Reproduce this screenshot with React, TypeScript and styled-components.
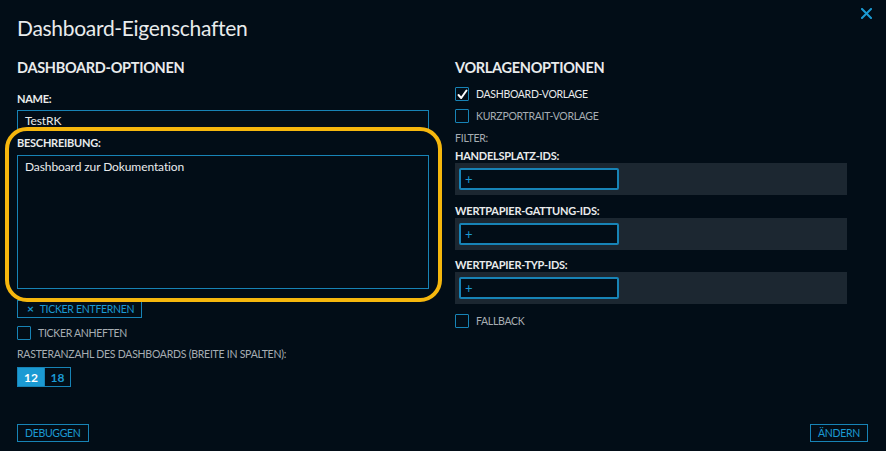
import React from 'react';
import styled, { createGlobalStyle } from 'styled-components';

const BLUE = '#1b9ad3';
const BORDER = '#1783b6';
const TEXT = '#e9ebec';
const MUTED = '#a7adb3';

const GlobalStyle = createGlobalStyle`
  html, body {
    margin: 0;
    padding: 0;
    background: #020d17;
  }
  body {
    font-family: Lato, "Open Sans", sans-serif;
    color: ${TEXT};
  }
`;

const Dialog = styled.div`
  position: relative;
  width: 886px;
  height: 451px;
  box-sizing: border-box;
  padding: 0 18px 9px 17px;
  background: #020d17;
  display: flex;
  flex-direction: column;
  overflow: hidden;
`;

const Header = styled.div`
  height: 56px;
  box-sizing: border-box;
  padding-top: 14px;
`;

const Title = styled.h1`
  margin: 0;
  font-size: 21px;
  letter-spacing: -0.3px;
  line-height: 28px;
  font-weight: 400;
  color: ${TEXT};
`;

const CloseButton = styled.button`
  position: absolute;
  top: 6px;
  right: 12px;
  background: none;
  border: none;
  padding: 2px;
  cursor: pointer;
  display: flex;
`;

const Columns = styled.div`
  display: grid;
  grid-template-columns: 412px 392px;
  column-gap: 26px;
`;

const Column = styled.div`
  display: flex;
  flex-direction: column;
  align-items: flex-start;
`;

const SectionTitle = styled.h2`
  margin: 0;
  font-size: 14.5px;
  letter-spacing: -0.3px;
  line-height: 24px;
  font-weight: 700;
  color: ${TEXT};
`;

const FieldLabel = styled.div<{ $gap?: number; $muted?: boolean }>`
  margin-top: ${p => p.$gap ?? 0}px;
  font-size: 11px;
  letter-spacing: -0.25px;
  line-height: 15px;
  font-weight: 700;
  text-transform: uppercase;
  color: ${p => (p.$muted ? MUTED : TEXT)};
`;

const MutedLabel = styled.div<{ $gap?: number }>`
  margin-top: ${p => p.$gap ?? 0}px;
  font-size: 10.5px;
  letter-spacing: -0.25px;
  line-height: 15px;
  font-weight: 400;
  text-transform: uppercase;
  color: ${MUTED};
`;

const TextInput = styled.div`
  margin-top: 4px;
  width: 100%;
  height: 21px;
  box-sizing: border-box;
  border: 1px solid ${BORDER};
  padding: 0 7px;
  font-size: 12px;
  letter-spacing: -0.1px;
  line-height: 19px;
  color: ${TEXT};
`;

const DescriptionGroup = styled.div`
  position: relative;
  width: 100%;
  margin-top: 4px;
`;

const Highlight = styled.div`
  position: absolute;
  left: -12px;
  right: -13px;
  top: -8px;
  bottom: -13px;
  border: 4px solid #f6b70d;
  border-radius: 22px;
  pointer-events: none;
  z-index: 2;
`;

const TextArea = styled.div`
  margin-top: 5px;
  width: 100%;
  height: 134px;
  box-sizing: border-box;
  border: 1px solid ${BORDER};
  padding: 3px 7px;
  font-size: 12px;
  letter-spacing: -0.1px;
  line-height: 16px;
  color: ${TEXT};
`;

const OutlineButton = styled.button<{ $gap?: number }>`
  margin-top: ${p => p.$gap ?? 0}px;
  height: 18px;
  box-sizing: border-box;
  border: 1px solid ${BORDER};
  background: transparent;
  color: ${BLUE};
  font-family: inherit;
  font-size: 10.5px;
  letter-spacing: -0.3px;
  line-height: 16px;
  padding: 0 7px;
  text-transform: uppercase;
  display: flex;
  align-items: center;
  gap: 6px;
  cursor: pointer;
`;

const ButtonX = styled.span`
  font-size: 12px;
  font-weight: 700;
  margin-left: 2px;
`;

const CheckRow = styled.label<{ $gap?: number; $active?: boolean }>`
  margin-top: ${p => p.$gap ?? 0}px;
  display: flex;
  align-items: center;
  gap: 7px;
  font-size: 10.5px;
  letter-spacing: -0.3px;
  line-height: 14px;
  text-transform: uppercase;
  color: ${p => (p.$active ? TEXT : MUTED)};
`;

const Box = styled.span`
  width: 14px;
  height: 14px;
  box-sizing: border-box;
  border: 1px solid ${BORDER};
  border-radius: 1px;
  display: flex;
  align-items: center;
  justify-content: center;
`;

const Segmented = styled.div`
  margin-top: 5px;
  display: flex;
  border: 1px solid ${BORDER};
  height: 20px;
  box-sizing: border-box;
`;

const Segment = styled.button<{ $active?: boolean }>`
  width: 26px;
  border: none;
  border-left: ${p => (p.$active ? 'none' : `1px solid ${BORDER}`)};
  background: ${p => (p.$active ? BLUE : 'transparent')};
  color: ${p => (p.$active ? '#fff' : BLUE)};
  font-family: inherit;
  font-size: 12px;
  font-weight: 700;
  padding: 0;
  cursor: pointer;
`;

const FilterPanel = styled.div`
  width: 100%;
  height: 32px;
  box-sizing: border-box;
  background: #1c2731;
  padding: 5px 4px;
`;

const IdInput = styled.div`
  width: 160px;
  height: 22px;
  box-sizing: border-box;
  border: 2px solid ${BORDER};
  border-radius: 2px;
  background: #020d17;
  color: ${BLUE};
  font-size: 13px;
  line-height: 18px;
  padding: 0 4px;
`;

const Footer = styled.div`
  margin-top: auto;
  display: flex;
  justify-content: space-between;
`;

const CloseIcon = () => (
  <svg width="11" height="11" viewBox="0 0 11 11">
    <path d="M1 1L10 10M10 1L1 10" stroke={BLUE} strokeWidth="2" strokeLinecap="square" />
  </svg>
);

const Check = () => (
  <svg width="11" height="11" viewBox="0 0 11 11">
    <path d="M1.5 6L4.2 9L9.5 1.5" stroke="#fff" strokeWidth="2" fill="none" strokeLinecap="round" strokeLinejoin="round" />
  </svg>
);

const filters = [
  { label: 'Handelsplatz-IDs:', gap: 2 },
  { label: 'Wertpapier-Gattung-IDs:', gap: 8 },
  { label: 'Wertpapier-Typ-IDs:', gap: 7 },
];

export default function App() {
  return (
    <>
      <GlobalStyle />
      <Dialog>
        <CloseButton aria-label="Schließen">
          <CloseIcon />
        </CloseButton>
        <Header>
          <Title>Dashboard-Eigenschaften</Title>
        </Header>
        <Columns>
          <Column>
            <SectionTitle>DASHBOARD-OPTIONEN</SectionTitle>
            <FieldLabel $gap={11}>Name:</FieldLabel>
            <TextInput>TestRK</TextInput>
            <DescriptionGroup>
              <Highlight />
              <FieldLabel>Beschreibung:</FieldLabel>
              <TextArea>Dashboard zur Dokumentation</TextArea>
            </DescriptionGroup>
            <OutlineButton $gap={11}>
              <ButtonX>×</ButtonX>Ticker entfernen
            </OutlineButton>
            <CheckRow $gap={8}>
              <Box />
              Ticker anheften
            </CheckRow>
            <MutedLabel $gap={7}>Rasteranzahl des Dashboards (Breite in Spalten):</MutedLabel>
            <Segmented>
              <Segment $active>12</Segment>
              <Segment>18</Segment>
            </Segmented>
          </Column>
          <Column>
            <SectionTitle>VORLAGENOPTIONEN</SectionTitle>
            <CheckRow $gap={7} $active>
              <Box>
                <Check />
              </Box>
              Dashboard-Vorlage
            </CheckRow>
            <CheckRow $gap={8}>
              <Box />
              Kurzportrait-Vorlage
            </CheckRow>
            <MutedLabel $gap={8}>Filter:</MutedLabel>
            {filters.map(f => (
              <React.Fragment key={f.label}>
                <FieldLabel $gap={f.gap}>{f.label}</FieldLabel>
                <FilterPanel>
                  <IdInput>+</IdInput>
                </FilterPanel>
              </React.Fragment>
            ))}
            <CheckRow $gap={10}>
              <Box />
              Fallback
            </CheckRow>
          </Column>
        </Columns>
        <Footer>
          <OutlineButton>Debuggen</OutlineButton>
          <OutlineButton>Ändern</OutlineButton>
        </Footer>
      </Dialog>
    </>
  );
}
